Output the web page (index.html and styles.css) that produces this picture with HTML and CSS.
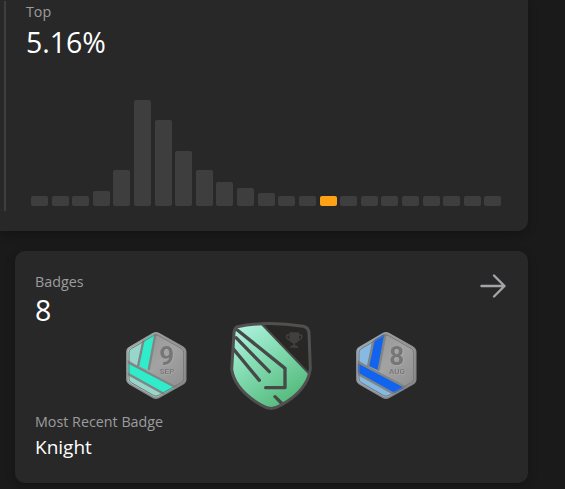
FILE: index.html
```
<!DOCTYPE html>
<html lang="en">
<head>
<meta charset="utf-8">
<title>Profile</title>
<link rel="stylesheet" href="styles.css">
</head>
<body>
<main class="page">
  <section class="card rank">
    <div class="rank-body">
      <div class="label">Top</div>
      <div class="value percent">5.16%</div>
      <div class="chart" id="chart"></div>
    </div>
  </section>
  <section class="card badges">
    <header class="badges-head">
      <div>
        <div class="label">Badges</div>
        <div class="value">8</div>
      </div>
      <svg class="arrow" viewBox="0 0 30 30"><path d="M3.500 15H26.500M16 4.500 26.500 15 16 25.500"/></svg>
    </header>
    <div class="badge-row">
      <svg class="month" viewBox="0 0 255 270">
        <defs>
          <linearGradient id="metal" x1="0" y1="0" x2="1" y2="1"><stop offset="0" stop-color="#8d8d8d"/><stop offset=".5" stop-color="#a3a3a3"/><stop offset="1" stop-color="#888"/></linearGradient>
          <linearGradient id="rim" x1="0" y1="0" x2="1" y2="1"><stop offset="0" stop-color="#a5a5a5"/><stop offset="1" stop-color="#808080"/></linearGradient>
          <clipPath id="hex"><path d="M114 41Q123 36 132 41L204 82Q212 87 212 96V178Q212 187 204 191L132 232Q123 237 114 232L45 192Q36 187 36 178V96Q36 87 45 82Z"/></clipPath>
        </defs>
        <g clip-path="url(#hex)">
          <path fill="url(#metal)" d="M30 30H220V240H30Z"/>
          <path fill="#98d5ca" d="M30 75 83 60 68 137 30 115ZM30 155 170 236 120 250 30 200Z"/>
          <path fill="#2fedcb" d="M87 51 122 30 102 152 70 137ZM30 122 190 206 153 226 30 157Z"/>
          <path class="seam" d="M87 54 69 139M122 38 101 150M30 122 192 207M30 157 160 229"/>
        </g>
        <path class="rim-shade" d="M115 47Q123 42 131 47L200 86Q206 90 206 98V176Q206 184 200 187L131 226Q123 231 115 226L49 188Q42 184 42 176V98Q42 90 49 86Z"/>
        <path class="rim" d="M114 41Q123 36 132 41L204 82Q212 87 212 96V178Q212 187 204 191L132 232Q123 237 114 232L45 192Q36 187 36 178V96Q36 87 45 82Z"/>
        <text class="day" x="155" y="136">9</text>
        <text class="month-name" x="156" y="162">SEP</text>
      </svg>
      <svg class="shield" viewBox="0 0 300 330">
        <defs>
          <linearGradient id="green" x1=".1" y1="0" x2=".7" y2="1"><stop offset="0" stop-color="#b5f3e4"/><stop offset=".35" stop-color="#8de2bd"/><stop offset="1" stop-color="#4db573"/></linearGradient>
          <clipPath id="shieldClip"><path d="M52 50Q140 32 250 49Q265 52 267 69L271 176Q263 242 182 286Q153 305 125 286Q44 240 35 178L42 68Q43 55 52 50Z"/></clipPath>
        </defs>
        <g clip-path="url(#shieldClip)">
          <path fill="#282725" d="M30 30H280V310H30Z"/>
          <path fill="url(#green)" d="M30 30H116L275 198V310H30Z"/>
          <path class="cut" d="M118 35 270 194"/>
          <path class="cut wide" d="M52 60 195 175V233H137M48 83 148 185M36 112 118 211M165 260 190 285"/>
        </g>
        <path class="shield-rim" d="M52 50Q140 32 250 49Q265 52 267 69L271 176Q263 242 182 286Q153 305 125 286Q44 240 35 178L42 68Q43 55 52 50Z"/>
        <path fill="#404040" d="M208 67H237V86Q237 97 225 100V106L234 109V113H211V109L220 106V100Q208 97 208 86Z"/>
        <path class="handles" d="M208 75Q196 73 201 84Q204 90 213 91M237 75Q249 73 244 84Q241 90 232 91"/>
      </svg>
      <svg class="month" viewBox="0 0 255 270">
        <g clip-path="url(#hex)">
          <path fill="url(#metal)" d="M30 30H220V240H30Z"/>
          <path fill="#87b9e1" d="M30 75 83 60 68 137 30 115ZM30 155 170 236 120 250 30 200Z"/>
          <path fill="#1264ef" d="M87 51 122 30 102 152 70 137ZM30 122 190 206 153 226 30 157Z"/>
          <path class="seam" d="M87 54 69 139M122 38 101 150M30 122 192 207M30 157 160 229"/>
        </g>
        <path class="rim-shade" d="M115 47Q123 42 131 47L200 86Q206 90 206 98V176Q206 184 200 187L131 226Q123 231 115 226L49 188Q42 184 42 176V98Q42 90 49 86Z"/>
        <path class="rim" d="M114 41Q123 36 132 41L204 82Q212 87 212 96V178Q212 187 204 191L132 232Q123 237 114 232L45 192Q36 187 36 178V96Q36 87 45 82Z"/>
        <text class="day" x="155" y="136">8</text>
        <text class="month-name" x="156" y="162">AUG</text>
      </svg>
    </div>
    <div class="recent">
      <div class="label">Most Recent Badge</div>
      <div class="recent-name">Knight</div>
    </div>
  </section>
</main>
<script src="chart.js"></script>
</body>
</html>
```
FILE: styles.css
```
* { box-sizing: border-box; }
body {
  margin: 0;
  height: 489px;
  overflow: hidden;
  background: #1a1a1a;
  font-family: "Open Sans", "Noto Sans", sans-serif;
}
.page { display: flex; flex-direction: column; gap: 20px; width: 528px; }
.card { background: #282828; box-shadow: 0 3px 10px rgba(0, 0, 0, .25); }
.label { color: #9c9c9f; font-size: 14.300px; line-height: 20px; }
.value { color: #fff; font-size: 28.500px; line-height: 36px; }
.rank { height: 231px; border-radius: 0 0 10px 0; padding: 1px 0 0 4px; }
.rank-body { height: 210px; border-left: 2px solid #3e3e3e; padding: 1px 27px 5px 20px; }
.percent { margin-top: 2px; }
.chart {
  display: flex;
  align-items: flex-end;
  justify-content: space-between;
  height: 107px;
  margin: 39px 0 0 5px;
  width: 470.500px;
}
.bar { width: 17px; background: #3e3e3e; border-radius: 2px; }
.bar.current { background: #ffa116; }
.badges { height: 232px; margin-left: 15px; border-radius: 10px; padding: 21px 20px; }
.badges-head { display: flex; justify-content: space-between; height: 48px; }
.badges-head .value { margin-top: -1px; line-height: 38px; }
.arrow { width: 30px; height: 30px; margin-top: -1px; fill: none; stroke: #a4a3a7; stroke-width: 2.400; stroke-linecap: round; stroke-linejoin: round; }
.badge-row { display: flex; align-items: center; margin: -10px 0 0 80px; height: 110px; }
.month { width: 85px; height: 90px; flex: none; }
.shield { width: 100px; height: 110px; margin: 0 25px 0 20px; flex: none; }
.rim { fill: none; stroke: url(#rim); stroke-width: 5; }
.rim-shade { fill: none; stroke: #777; stroke-width: 3; }
.seam { fill: none; stroke: #808684; stroke-width: 7; }
.day, .month-name { font-family: Roboto, sans-serif; text-anchor: middle; fill: #767676; filter: drop-shadow(2px 2px 0 #aeaeae); }
.day { font-size: 78px; font-weight: 700; }
.month-name { font-size: 24px; font-weight: 500; }
.cut { fill: none; stroke: #464947; stroke-width: 6; }
.wide { stroke-width: 10; stroke-linecap: round; stroke-linejoin: round; }
.shield-rim { fill: none; stroke: #505050; stroke-width: 9; }
.handles { fill: none; stroke: #404040; stroke-width: 5; }
.recent { margin-top: -8px; }
.recent-name { margin-top: 2px; color: #fff; font-size: 19px; line-height: 26px; }
```
FILE: chart.js
```
const heights = [10.5, 10.5, 10.5, 15, 36.5, 106.5, 86.5, 55, 36.5, 24, 18, 13, 10.5, 10.5, 10.5, 10.5, 10.5, 10.5, 10.5, 10.5, 10.5, 10.5, 10.5];
const chart = document.getElementById("chart");
heights.forEach((height, index) => {
  const bar = document.createElement("div");
  bar.className = index === 14 ? "bar current" : "bar";
  bar.style.height = `${height}px`;
  chart.append(bar);
});
```
